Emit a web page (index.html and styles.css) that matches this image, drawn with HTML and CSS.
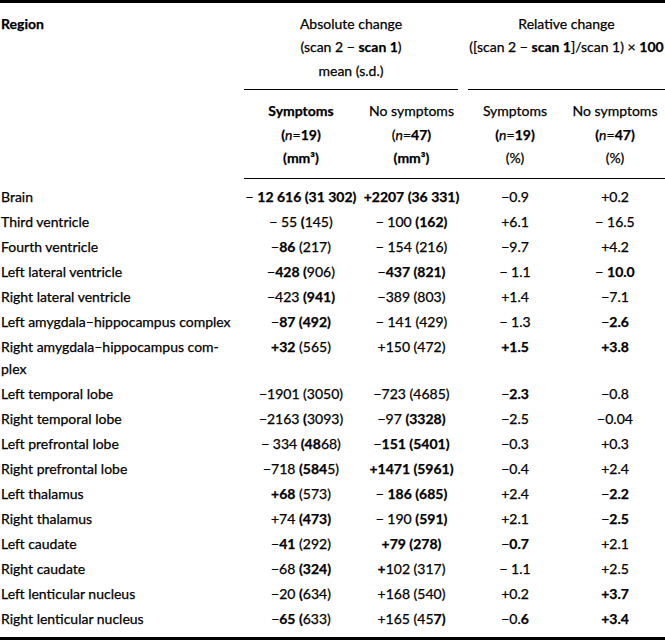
FILE: index.html
```html
<!DOCTYPE html>
<html>
<head>
<meta charset="utf-8">
<link rel="stylesheet" href="styles.css">
</head>
<body>
<table class="tbl">
  <colgroup>
    <col class="c-region">
    <col class="c-abs1">
    <col class="c-abs2">
    <col class="c-rel1">
    <col class="c-rel2">
  </colgroup>
  <thead>
    <tr class="grp">
      <th class="region-h" rowspan="2"><b>Region</b></th>
      <th class="grp-cell" colspan="2"><div class="grp-abs">Absolute change<br>(scan 2 − <b>scan 1</b>)<br>mean (s.d.)</div></th>
      <th class="grp-cell" colspan="2"><div class="grp-rel">Relative change<br>([scan 2 − <b>scan 1</b>]/scan 1) × <b>100</b><br>&nbsp;</div></th>
    </tr>
    <tr class="sub">
      <th><b>Symptoms</b><br><b>(</b><i>n</i>=<b>19)</b><br><b>(mm³)</b></th>
      <th>No symptoms<br>(<i>n</i>=<b>47)</b><br><b>(mm³)</b></th>
      <th>Symptoms<br><b>(</b><i>n</i>=<b>19)</b><br>(%)</th>
      <th>No symptoms<br><b>(</b><i>n</i>=<b>47)</b><br>(%)</th>
    </tr>
  </thead>
  <tbody>
    <tr><td>Brain</td><td>− <b>12 616 (31 302)</b></td><td><b>+2207 (36 331)</b></td><td>−0.9</td><td>+0.2</td></tr>
    <tr><td>Third ventricle</td><td>− 55 <b>(</b>145)</td><td>− 100 <b>(162)</b></td><td>+6.1</td><td>− 16.5</td></tr>
    <tr><td>Fourth ventricle</td><td>−<b>86</b> (217)</td><td>− 154 (216)</td><td>−9.7</td><td>+4.2</td></tr>
    <tr><td>Left lateral ventricle</td><td>−<b>428 (</b>906)</td><td>−<b>437 (821)</b></td><td>− 1.1</td><td>− <b>10.0</b></td></tr>
    <tr><td>Right lateral ventricle</td><td>−423 <b>(941)</b></td><td>−389 (803)</td><td>+1.4</td><td>−7.1</td></tr>
    <tr><td>Left amygdala–hippocampus complex</td><td>−<b>87 (492)</b></td><td>− 141 (429)</td><td>− 1.3</td><td>−<b>2.6</b></td></tr>
    <tr><td>Right amygdala–hippocampus com-<br>plex</td><td><b>+32</b> (565)</td><td>+150 (472)</td><td><b>+1.5</b></td><td><b>+3.8</b></td></tr>
    <tr><td>Left temporal lobe</td><td>−1901 (3050)</td><td>−723 (4685)</td><td>−<b>2.3</b></td><td>−0.8</td></tr>
    <tr><td>Right temporal lobe</td><td>−2163 <b>(</b>3093)</td><td>−97 <b>(3328)</b></td><td>−2.5</td><td>−0.04</td></tr>
    <tr><td>Left prefrontal lobe</td><td>− 334 <b>(48</b>68)</td><td>−<b>151 (5401)</b></td><td>−0.3</td><td>+0.3</td></tr>
    <tr><td>Right prefrontal lobe</td><td>−718 <b>(584</b>5)</td><td><b>+1471 (5961)</b></td><td>−0.4</td><td>+2.4</td></tr>
    <tr><td>Left thalamus</td><td><b>+68</b> (573)</td><td>− <b>186 (685)</b></td><td>+2.4</td><td>−<b>2.2</b></td></tr>
    <tr><td>Right thalamus</td><td>+74 <b>(473)</b></td><td>− 190 <b>(591)</b></td><td>+2.1</td><td>−<b>2.5</b></td></tr>
    <tr><td>Left caudate</td><td>−<b>41</b> (292)</td><td><b>+79 (278)</b></td><td>−<b>0.7</b></td><td>+2.1</td></tr>
    <tr><td>Right caudate</td><td>−68 <b>(324)</b></td><td><b>+</b>102 (317)</td><td>− 1.1</td><td>+2.5</td></tr>
    <tr><td>Left lenticular nucleus</td><td>−20 <b>(</b>634)</td><td>+168 (540)</td><td>+0.2</td><td><b>+3.7</b></td></tr>
    <tr><td>Right lenticular nucleus</td><td>−<b>65 (</b>633)</td><td>+165 (45<b>7)</b></td><td>−0.<b>6</b></td><td><b>+3.4</b></td></tr>
  </tbody>
</table>
</body>
</html>
```

FILE: styles.css
```css
html, body {
  margin: 0;
  padding: 0;
  background: #fff;
}

.tbl {
  width: 665px;
  border-collapse: collapse;
  table-layout: fixed;
  font-family: Lato, "Open Sans", sans-serif;
  font-size: 14px;
  color: #000;
  -webkit-text-stroke: 0.25px #000;
  border-top: 3px solid #000;
  border-bottom: 3px solid #000;
}

.c-region { width: 244px; }
.c-abs1 { width: 114px; }
.c-abs2 { width: 107px; }
.c-rel1 { width: 100px; }
.c-rel2 { width: 100px; }

.tbl th {
  font-weight: normal;
  padding: 0;
  line-height: 23.5px;
  vertical-align: top;
}

.tbl b {
  font-weight: bold;
}

.region-h {
  text-align: left;
  padding: 8.5px 0 0 1px !important;
}

.grp-cell {
  padding: 8.5px 0 0 0 !important;
  text-align: center;
}

.grp-abs {
  padding-bottom: 7px;
  border-bottom: 1px solid #000;
  margin-right: 7px;
}

.grp-rel {
  padding-bottom: 7px;
  border-bottom: 1px solid #000;
  margin-left: 3px;
}

.sub th {
  text-align: center;
  padding: 9.25px 0 8.25px 0;
  border-bottom: 1px solid #000;
}

.tbl td {
  padding: 1.5px 0;
  line-height: 22px;
  text-align: center;
  vertical-align: top;
  white-space: nowrap;
}

.tbl td:first-child {
  text-align: left;
  padding-left: 1px;
}

.tbl tbody tr:first-child td {
  padding-top: 7px;
}

.tbl tbody tr:last-child td {
  padding-bottom: 7px;
}
```
